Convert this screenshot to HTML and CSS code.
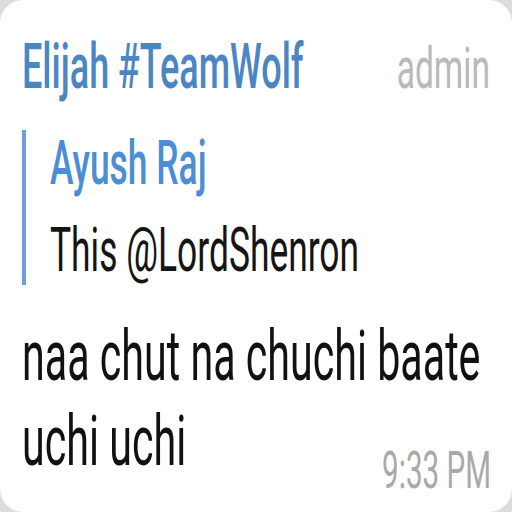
FILE: index.html
```html
<!DOCTYPE html>
<html>
<head>
<meta charset="utf-8">
<link rel="stylesheet" href="styles.css">
</head>
<body>
<div class="card">
  <div class="header">
    <span class="t name">Elijah #TeamWolf</span>
    <span class="t role">admin</span>
  </div>
  <div class="reply">
    <div class="bar"></div>
    <div class="reply-body">
      <div class="reply-line"><span class="t reply-name">Ayush Raj</span></div>
      <div class="reply-line"><span class="t reply-text">This @LordShenron</span></div>
    </div>
  </div>
  <div class="message">
    <div class="msg-line"><span class="t">naa chut na chuchi baate</span></div>
    <div class="msg-line"><span class="t">uchi uchi</span></div>
  </div>
  <div class="time"><span class="t">9:33 PM</span></div>
</div>
</body>
</html>
```

FILE: styles.css
```css
html, body {
  margin: 0;
  padding: 0;
  width: 512px;
  height: 512px;
  overflow: hidden;
  background: #dcdcdc;
}
.card {
  width: 512px;
  height: 512px;
  box-sizing: border-box;
  padding: 40px 21px 0 22px;
  background: #ffffff;
  border-radius: 23px;
  font-family: Roboto, "Liberation Sans", sans-serif;
}
/* tall, narrow glyphs of the screenshot: stretch text vertically around its baseline */
.t {
  display: inline-block;
  white-space: nowrap;
  transform: scaleY(1.724);
  transform-origin: 0 calc(50% + 0.342em);
}
.header {
  display: flex;
  justify-content: space-between;
  align-items: baseline;
  height: 72px;
  line-height: 72px;
}
.name {
  font-size: 36px;
  font-weight: 500;
  color: #4a86c4;
}
.role {
  font-size: 33.6px;
  color: #b9b9b9;
  margin-right: 1px;
}
.reply {
  display: flex;
  margin-top: 17px;
}
.bar {
  width: 4px;
  margin: 1px 0 18px 0;
  background: #6a9fdc;
  flex: none;
}
.reply-body {
  margin-left: 24px;
  font-size: 35.4px;
  line-height: 87px;
}
.reply-line {
  height: 87px;
}
.reply-name {
  font-weight: 500;
  color: #4c8ed4;
}
.reply-text {
  color: #151515;
}
.message {
  margin-top: 21px;
  font-size: 41.2px;
  line-height: 85px;
  color: #111111;
}
.msg-line {
  height: 85px;
}
.time {
  margin-top: -46px;
  height: 60px;
  text-align: right;
  font-size: 29.6px;
  line-height: 60px;
  color: #a9a9a9;
}
.time .t {
  transform-origin: 100% calc(50% + 0.342em);
}
```
